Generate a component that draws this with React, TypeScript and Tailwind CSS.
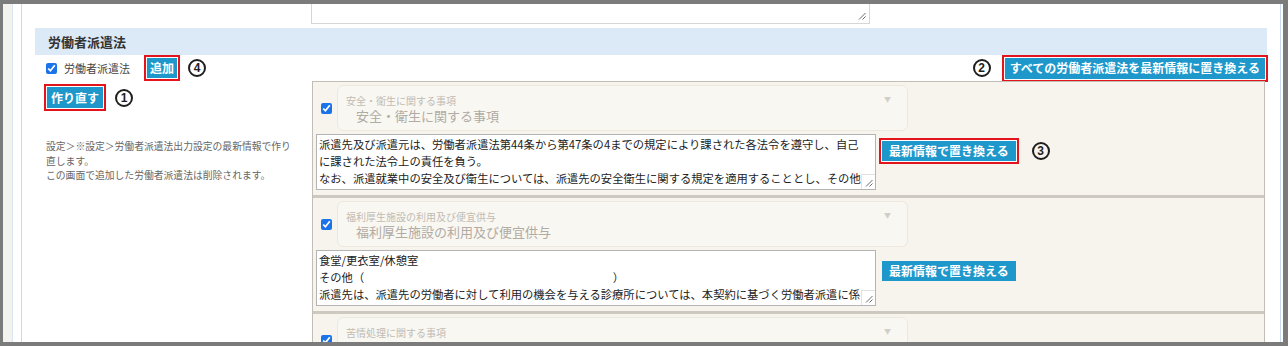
import React from "react";

type Item = {
  title: string;
  lines: string[];
  marked?: boolean;
};

const items: Item[] = [
  {
    title: "安全・衛生に関する事項",
    lines: [
      "派遣先及び派遣元は、労働者派遣法第44条から第47条の4までの規定により課された各法令を遵守し、自己",
      "に課された法令上の責任を負う。",
      "なお、派遣就業中の安全及び衛生については、派遣先の安全衛生に関する規定を適用することとし、その他",
      "については、派遣元の安全衛生に関する規定を適用する。",
    ],
    marked: true,
  },
  {
    title: "福利厚生施設の利用及び便宜供与",
    lines: [
      "食堂/更衣室/休憩室",
      "その他（\u3000\u3000\u3000\u3000\u3000\u3000\u3000\u3000\u3000\u3000\u3000\u3000\u3000\u3000\u3000\u3000\u3000\u3000\u3000\u3000\u3000\u3000）",
      "派遣先は、派遣先の労働者に対して利用の機会を与える診療所については、本契約に基づく労働者派遣に係",
      "る派遣労働者に対しても、利用の機会を与えるように配慮しなければならないこととする。",
    ],
  },
  {
    title: "苦情処理に関する事項",
    lines: ["派遣労働者の苦情の申出を受ける者"],
  },
];

const Grip = () => (
  <svg width="8" height="8" viewBox="0 0 8 8">
    <path d="M7.5 1 L1 7.5 M7.5 4.5 L4.5 7.5" stroke="#6b6b6b" strokeWidth="1" />
  </svg>
);

const Marker = ({ children }: { children: React.ReactNode }) => (
  <span className="inline-flex border-2 border-[#e3141b] bg-white p-[1px]">{children}</span>
);

// circled annotation number
const Num = ({ n }: { n: string }) => (
  <span className="inline-flex items-center justify-center w-[18px] h-[18px] rounded-full border-2 border-[#1e1e1e] text-[12px] leading-none font-bold text-[#1e1e1e] font-['Liberation_Sans',sans-serif]">
    {n}
  </span>
);

const Btn = ({ label, className = "" }: { label: string; className?: string }) => (
  <span
    className={`inline-flex items-center h-[20px] bg-[#1e98cb] text-white text-[12px] font-bold leading-none ${className}`}
  >
    {label}
  </span>
);

const Check = () => (
  <input type="checkbox" defaultChecked className="m-0 w-[11px] h-[11px] accent-[#1a73e8] shrink-0" />
);

const Entry = ({ item, first }: { item: Item; first: boolean }) => (
  <div className={`${first ? "" : "border-t-[3px] border-[#cdc9c1]"} pt-[3px] pb-[5px] pl-[3px]`}>
    <div className="flex items-center">
      <div className="w-[17px] flex justify-end pr-[1px]">
        <Check />
      </div>
      <div className="ml-[4px] w-[571px] h-[46px] rounded-[6px] border border-[#ece8e0] bg-[#f9f7f2] flex justify-between pl-[8px] pr-[16px] pt-[8px]">
        <div>
          <div className="text-[10px] leading-[13px] text-[#c0bbb3]">{item.title}</div>
          <div className="text-[13px] leading-[17px] text-[#b0aba3] pl-[10px]">{item.title}</div>
        </div>
        <span className="text-[7px] leading-[10px] text-[#d2cec6]">▼</span>
      </div>
    </div>
    <div className="flex items-start mt-[3px]">
      <div className="relative w-[560px] h-[56px] border border-[#b4b4b4] bg-white px-[2px] pt-[1px] text-[11.3px] leading-[17px] text-[#222] overflow-hidden">
        {item.lines.map((l, i) => (
          <div key={i} className="whitespace-pre">
            {l}
          </div>
        ))}
        <div className="absolute right-0 bottom-0 w-[14px] h-[15px] bg-white border-l border-t border-[#e2e2e2] flex items-end justify-end p-[2px]">
          <Grip />
        </div>
      </div>
      <div className="ml-[3px] mt-[4px] flex items-center">
        {item.marked ? (
          <>
            <Marker>
              <Btn label="最新情報で置き換える" className="px-[7px]" />
            </Marker>
            <span className="ml-[13px] flex">
              <Num n="3" />
            </span>
          </>
        ) : (
          <span className="p-[3px]">
            <Btn label="最新情報で置き換える" className="px-[7px]" />
          </span>
        )}
      </div>
    </div>
  </div>
);

export default function App() {
  return (
    <div className="w-[1288px] h-[346px] bg-[#7b7b7b] pt-[4px] pl-[3px] pr-[5px] pb-[4px] overflow-hidden font-['Noto_Sans_CJK_JP','Noto_Sans',sans-serif]">
      <div className="h-full flex bg-[#f3f2ef] overflow-hidden">
        <div className="w-[9px] shrink-0" />
        <div className="flex-1 h-full bg-white border-l border-[#d8e6f6] pl-[8px] pr-[2px]">
          <div className="h-full border-l border-r border-[#c8dbf2] bg-white px-[13px] overflow-hidden">
            {/* previous field, cut off at the top */}
            <div className="flex">
              <div className="w-[276px] shrink-0" />
              <div className="relative w-[559px] h-[20px] border-x border-b border-[#d6d6d6] bg-white">
                <div className="absolute right-[3px] bottom-[3px]">
                  <Grip />
                </div>
              </div>
            </div>

            <div className="mt-[4px] h-[27px] bg-[#dce9f7] flex items-center pl-[13px] text-[13px] font-bold text-[#333]">
              労働者派遣法
            </div>

            <div className="grid grid-cols-[277px_1fr]">
              <div className="h-[26px] flex items-center pl-[11px]">
                <Check />
                <span className="ml-[7px] text-[11px] text-[#444]">労働者派遣法</span>
                <span className="ml-[14px] flex">
                  <Marker>
                    <Btn label="追加" className="px-[3px] h-[19px]" />
                  </Marker>
                </span>
                <span className="ml-[8px] flex">
                  <Num n="4" />
                </span>
              </div>
              <div className="h-[26px] flex items-center justify-end -mr-px">
                <Num n="2" />
                <span className="ml-[11px] flex">
                  <Marker>
                    <Btn label="すべての労働者派遣法を最新情報に置き換える" className="px-[5px] h-[21px]" />
                  </Marker>
                </span>
              </div>

              <div className="pt-[3px] pl-[9px]">
                <div className="flex items-center">
                  <Marker>
                    <Btn label="作り直す" className="px-[4px] h-[21px]" />
                  </Marker>
                  <span className="ml-[9px] flex">
                    <Num n="1" />
                  </span>
                </div>
                <div className="mt-[28px] pl-[2px] text-[9.8px] leading-[14.5px] text-[#666]">
                  <div>設定＞※設定＞労働者派遣法出力設定の最新情報で作り</div>
                  <div>直します。</div>
                  <div>この画面で追加した労働者派遣法は削除されます。</div>
                </div>
              </div>
              <div className="w-[953px] border border-[#c2beb6] bg-[#f7f4ed]">
                {items.map((item, i) => (
                  <Entry key={i} item={item} first={i === 0} />
                ))}
              </div>
            </div>
          </div>
        </div>
      </div>
    </div>
  );
}
